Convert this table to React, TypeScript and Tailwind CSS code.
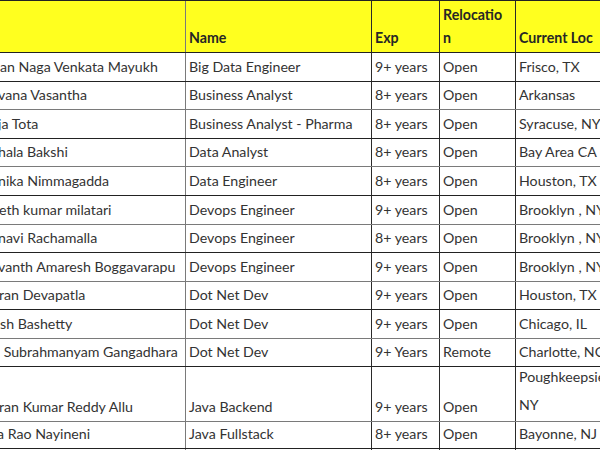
import React from "react";

type Row = {
  first: string;
  off: number;
  name: string;
  exp: string;
  rel: string;
  loc: React.ReactNode;
  h: number;
  tall?: boolean;
};

const rows: Row[] = [
  { first: "an Naga Venkata Mayukh", off: 0, name: "Big Data Engineer", exp: "9+ years", rel: "Open", loc: "Frisco, TX", h: 29 },
  { first: "vana Vasantha", off: -2, name: "Business Analyst", exp: "8+ years", rel: "Open", loc: "Arkansas", h: 28 },
  { first: "ja Tota", off: -2, name: "Business Analyst - Pharma", exp: "8+ years", rel: "Open", loc: "Syracuse, NY", h: 29 },
  { first: "hala Bakshi", off: -2, name: "Data Analyst", exp: "8+ years", rel: "Open", loc: "Bay Area CA", h: 28 },
  { first: "nika Nimmagadda", off: -2, name: "Data Engineer", exp: "8+ years", rel: "Open", loc: "Houston, TX", h: 29 },
  { first: "eth kumar milatari", off: -1, name: "Devops Engineer", exp: "9+ years", rel: "Open", loc: "Brooklyn , NY", h: 29 },
  { first: "navi Rachamalla", off: -2, name: "Devops Engineer", exp: "8+ years", rel: "Open", loc: "Brooklyn , NY", h: 28 },
  { first: "vanth Amaresh Boggavarapu", off: -2, name: "Devops Engineer", exp: "9+ years", rel: "Open", loc: "Brooklyn , NY", h: 29 },
  { first: "ran Devapatla", off: -1, name: "Dot Net Dev", exp: "9+ years", rel: "Open", loc: "Houston, TX", h: 28 },
  { first: "sh Bashetty", off: 0, name: "Dot Net Dev", exp: "9+ years", rel: "Open", loc: "Chicago, IL", h: 29 },
  { first: " Subrahmanyam Gangadhara", off: 0, name: "Dot Net Dev", exp: "9+ Years", rel: "Remote", loc: "Charlotte, NC", h: 28 },
  { first: "ran Kumar Reddy Allu", off: -1, name: "Java Backend", exp: "9+ years", rel: "Open", loc: "", h: 55, tall: true },
  { first: "a Rao Nayineni", off: -3, name: "Java Fullstack", exp: "8+ years", rel: "Open", loc: "Bayonne, NJ", h: 27 },
  { first: "", off: 0, name: "", exp: "", rel: "", loc: "", h: 29 },
];

const font = { fontFamily: "Lato, 'Open Sans', Arial, sans-serif" };

function Cell({
  w,
  children,
  first = false,
  last = false,
}: {
  w: string;
  children?: React.ReactNode;
  first?: boolean;
  last?: boolean;
}) {
  const pad = first ? "pl-0" : "pl-[3px]";
  const border = last ? "border-r-0" : first ? "border-r border-[#7a7a7a]" : "border-r border-[#2a2a2a]";
  return (
    <div
      className={`${w} ${pad} ${border} shrink-0 flex items-end overflow-hidden whitespace-nowrap pb-[3px] leading-[23px]`}
    >
      {children}
    </div>
  );
}

export default function App() {
  return (
    <div
      className="w-[600px] h-[450px] overflow-hidden bg-white text-[14.2px] text-[#333333]"
      style={font}
    >
      <div className="w-[720px]">
        {/* header */}
        <div className="flex h-[53px] border-y border-[#222222] bg-[#ffff1f] font-bold text-[#262626]">
          <Cell w="w-[186px]" first>
            <span className="-ml-[8px]">e</span>
          </Cell>
          <Cell w="w-[186px]">Name</Cell>
          <Cell w="w-[68px]">Exp</Cell>
          <Cell w="w-[76px]">
            <div className="flex flex-col">
              <span>Relocatio</span>
              <span>n</span>
            </div>
          </Cell>
          <Cell w="w-[200px]" last>
            Current Loc
          </Cell>
        </div>
        {rows.map((r, i) => (
          <div
            key={i}
            className={`flex border-b ${i % 2 === 1 ? "border-[#7a7a7a]" : "border-[#222222]"}`}
            style={{ height: r.h }}
          >
            <Cell w="w-[186px]" first>
              <span style={{ marginLeft: r.off }} className="whitespace-pre">
                {r.first}
              </span>
            </Cell>
            <Cell w="w-[186px]">{r.name}</Cell>
            <Cell w="w-[68px]">{r.exp}</Cell>
            <Cell w="w-[76px]">{r.rel}</Cell>
            <Cell w="w-[200px]" last>
              {r.tall ? (
                <div className="flex flex-col leading-[28px] -mb-[1px]">
                  <span>Poughkeepsie,</span>
                  <span>NY</span>
                </div>
              ) : (
                r.loc
              )}
            </Cell>
          </div>
        ))}
      </div>
    </div>
  );
}
